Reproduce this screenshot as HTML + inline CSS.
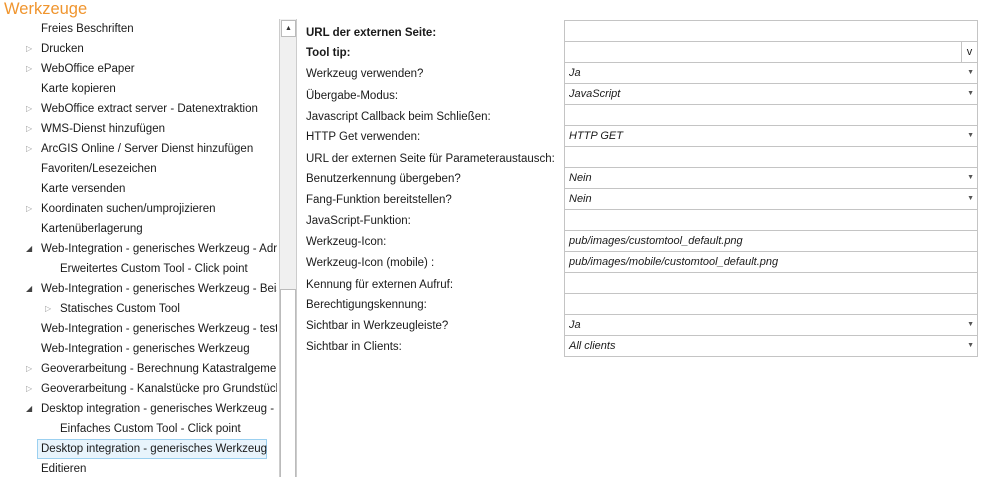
<!DOCTYPE html>
<html><head><meta charset="utf-8"><style>
*{margin:0;padding:0;box-sizing:border-box}
html,body{width:981px;height:477px;overflow:hidden}
body{background:#fff;font-family:"Liberation Sans",sans-serif;font-size:11.5px;color:#1a1a1a;position:relative}
.title{position:absolute;left:4px;top:0px;font-size:16.5px;color:#f0952e}
.tree{position:absolute;left:0;top:19px;width:277px;height:458px;overflow:hidden}
.ti{position:absolute;white-space:nowrap;height:20px;line-height:20px}
.tri{position:absolute;font-size:8px;color:#999}
.sb{position:absolute;left:279px;top:19px;width:18px;height:458px;background:#f0f0f0;border-left:1px solid #ccc;border-right:1px solid #ccc;overflow:hidden}
.up{position:absolute;left:1px;top:1px;width:15px;height:17px;background:#fff;border:1px solid #bbb;font-size:7px;text-align:center;line-height:15px;color:#333}
.thumb{position:absolute;left:0;top:270px;width:16px;height:200px;background:#fff;border:1px solid #bbb}
.lbl{position:absolute;left:306px;white-space:nowrap}
.box{position:absolute;left:564px;width:414px;height:22px;border:1px solid #c4c4c4;font-style:italic;font-size:11px;line-height:20px;padding-left:4px}
.dd{position:absolute;right:3px;top:0;font-size:7px;color:#555;font-style:normal}
.sel{background:#e8f4fc;border:1px solid #9bd0f0}
</style></head><body>
<div class="title">Werkzeuge</div>
<div class="tree">
<div class="ti" style="left:41px;top:0">Freies Beschriften</div>
<div class="ti" style="left:26px;top:20px"><span class="tri">▷</span><span style="margin-left:15px">Drucken</span></div>
<div class="ti" style="left:26px;top:40px"><span class="tri">▷</span><span style="margin-left:15px">WebOffice ePaper</span></div>
<div class="ti" style="left:41px;top:60px">Karte kopieren</div>
<div class="ti" style="left:26px;top:80px"><span class="tri">▷</span><span style="margin-left:15px">WebOffice extract server - Datenextraktion</span></div>
<div class="ti" style="left:26px;top:100px"><span class="tri">▷</span><span style="margin-left:15px">WMS-Dienst hinzufügen</span></div>
<div class="ti" style="left:26px;top:120px"><span class="tri">▷</span><span style="margin-left:15px">ArcGIS Online / Server Dienst hinzufügen</span></div>
<div class="ti" style="left:41px;top:140px">Favoriten/Lesezeichen</div>
<div class="ti" style="left:41px;top:160px">Karte versenden</div>
<div class="ti" style="left:26px;top:180px"><span class="tri">▷</span><span style="margin-left:15px">Koordinaten suchen/umprojizieren</span></div>
<div class="ti" style="left:41px;top:200px">Kartenüberlagerung</div>
<div class="ti" style="left:26px;top:220px"><span class="tri" style="color:#444">◢</span><span style="margin-left:15px">Web-Integration - generisches Werkzeug - Adr</span></div>
<div class="ti" style="left:60px;top:240px">Erweitertes Custom Tool - Click point</div>
<div class="ti" style="left:26px;top:260px"><span class="tri" style="color:#444">◢</span><span style="margin-left:15px">Web-Integration - generisches Werkzeug - Beis</span></div>
<div class="ti" style="left:45px;top:280px"><span class="tri">▷</span><span style="margin-left:15px">Statisches Custom Tool</span></div>
<div class="ti" style="left:41px;top:300px">Web-Integration - generisches Werkzeug - test</div>
<div class="ti" style="left:41px;top:320px">Web-Integration - generisches Werkzeug</div>
<div class="ti" style="left:26px;top:340px"><span class="tri">▷</span><span style="margin-left:15px">Geoverarbeitung - Berechnung Katastralgemei</span></div>
<div class="ti" style="left:26px;top:360px"><span class="tri">▷</span><span style="margin-left:15px">Geoverarbeitung - Kanalstücke pro Grundstück</span></div>
<div class="ti" style="left:26px;top:380px"><span class="tri" style="color:#444">◢</span><span style="margin-left:15px">Desktop integration - generisches Werkzeug -</span></div>
<div class="ti" style="left:60px;top:400px">Einfaches Custom Tool - Click point</div>
<div class="ti sel" style="left:37px;top:420px;width:230px;padding-left:3px;line-height:18px">Desktop integration - generisches Werkzeug</div>
<div class="ti" style="left:41px;top:440px">Editieren</div>
</div>
<div class="sb"><div class="up">▲</div><div class="thumb"></div></div>

<div class="lbl" style="top:27px;font-weight:bold">URL der externen Seite:</div>
<div class="lbl" style="top:47px;font-weight:bold">Tool tip:</div>
<div class="lbl" style="top:68px">Werkzeug verwenden?</div>
<div class="lbl" style="top:90px">Übergabe-Modus:</div>
<div class="lbl" style="top:111px">Javascript Callback beim Schließen:</div>
<div class="lbl" style="top:131px">HTTP Get verwenden:</div>
<div class="lbl" style="top:153px">URL der externen Seite für Parameteraustausch:</div>
<div class="lbl" style="top:173px">Benutzerkennung übergeben?</div>
<div class="lbl" style="top:194px">Fang-Funktion bereitstellen?</div>
<div class="lbl" style="top:215px">JavaScript-Funktion:</div>
<div class="lbl" style="top:236px">Werkzeug-Icon:</div>
<div class="lbl" style="top:257px">Werkzeug-Icon (mobile) :</div>
<div class="lbl" style="top:279px">Kennung für externen Aufruf:</div>
<div class="lbl" style="top:299px">Berechtigungskennung:</div>
<div class="lbl" style="top:320px">Sichtbar in Werkzeugleiste?</div>
<div class="lbl" style="top:341px">Sichtbar in Clients:</div>

<div class="box" style="top:20px"></div>
<div class="box" style="top:41px"><span style="position:absolute;right:0;top:0;width:16px;height:20px;border-left:1px solid #c4c4c4;font-style:normal;text-align:center">v</span></div>
<div class="box" style="top:62px">Ja<span class="dd">▼</span></div>
<div class="box" style="top:83px">JavaScript<span class="dd">▼</span></div>
<div class="box" style="top:104px"></div>
<div class="box" style="top:125px">HTTP GET<span class="dd">▼</span></div>
<div class="box" style="top:146px"></div>
<div class="box" style="top:167px">Nein<span class="dd">▼</span></div>
<div class="box" style="top:188px">Nein<span class="dd">▼</span></div>
<div class="box" style="top:209px"></div>
<div class="box" style="top:230px">pub/images/customtool_default.png</div>
<div class="box" style="top:251px">pub/images/mobile/customtool_default.png</div>
<div class="box" style="top:272px"></div>
<div class="box" style="top:293px"></div>
<div class="box" style="top:314px">Ja<span class="dd">▼</span></div>
<div class="box" style="top:335px">All clients<span class="dd">▼</span></div>
</body></html>
